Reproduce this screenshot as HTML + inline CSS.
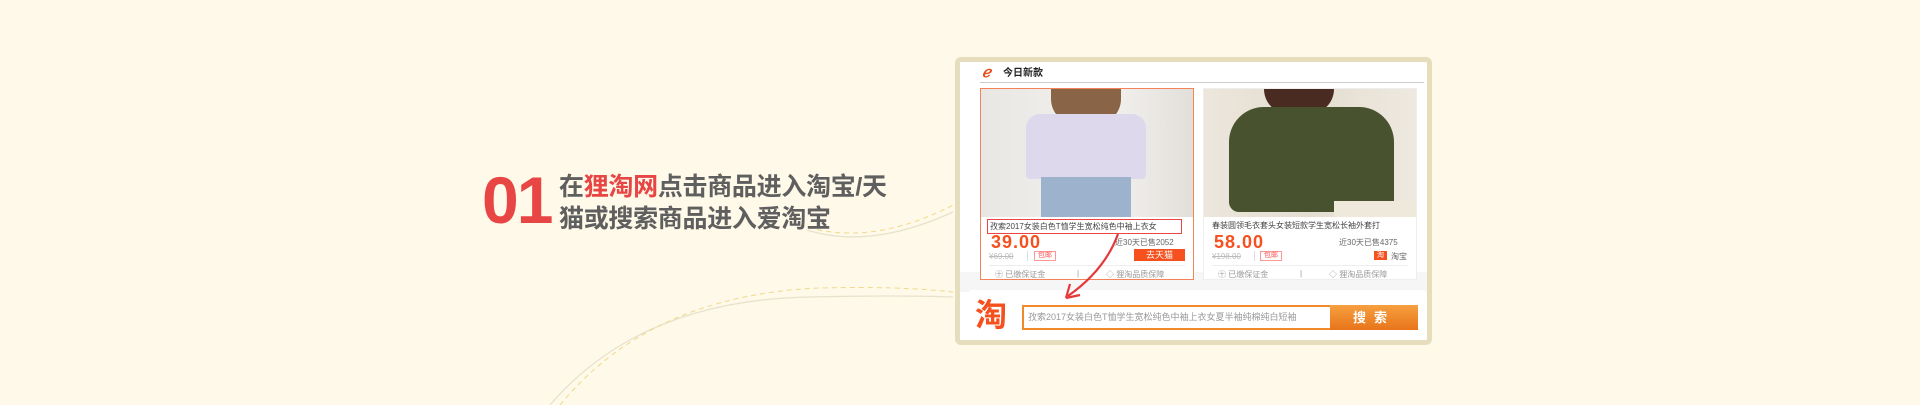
<!DOCTYPE html>
<html><head><meta charset="utf-8"><style>
*{margin:0;padding:0;box-sizing:border-box}
body{width:1920px;height:405px;background:#fef9e8;position:relative;overflow:hidden;font-family:"Liberation Sans","Noto Sans CJK SC",sans-serif}
.abs{position:absolute}
.num{left:482px;top:166px;font-size:66px;font-weight:bold;color:#e84545;letter-spacing:-2px;line-height:68px}
.t{left:559px;font-size:25px;font-weight:bold;color:#5f5f5f;line-height:30px;letter-spacing:-0.3px;white-space:nowrap}
.panel{left:955px;top:57px;width:477px;height:288px;border:5px solid #e6ddbd;border-radius:6px;background:#fff}
.card{top:26px;width:214px;height:192px;background:#fff;z-index:2}
.s{font-size:8px;color:#666;white-space:nowrap}
</style></head><body>
<svg class="abs" style="left:0;top:0" width="1920" height="405">
<path d="M807 230 Q870 250 953 212" fill="none" stroke="#e8e2cc" stroke-width="1.3"/>
<path d="M800 225 Q870 248 953 205" fill="none" stroke="#f0d98c" stroke-width="1" stroke-dasharray="5 4"/>
<path d="M550 405 Q640 300 810 297 Q900 295 953 297" fill="none" stroke="#e8e2cc" stroke-width="1.3"/>
<path d="M560 405 Q650 295 820 288 Q900 286 953 292" fill="none" stroke="#f0d98c" stroke-width="1" stroke-dasharray="5 4"/>
</svg>
<div class="abs num">01</div>
<div class="abs t" style="top:172px">在<span style="color:#e84545">狸淘网</span>点击商品进入淘宝/天</div>
<div class="abs t" style="top:204px">猫或搜索商品进入爱淘宝</div>

<div class="abs panel">
  <div class="abs" style="left:22px;top:5px;width:16px;height:12px;color:#e8501e;font-size:15px;font-weight:bold;font-style:italic;line-height:12px">ℯ</div>
  <div class="abs" style="left:43px;top:5px;font-size:10px;font-weight:bold;color:#222;line-height:14px">今日新款</div>
  <div class="abs" style="left:20px;top:20px;width:444px;height:1px;background:#ccc"></div>

  <div class="abs" style="left:0;top:210px;width:467px;height:20px;background:#f6f6f6"></div>

  <div class="abs card" style="left:20px;border:1px solid #f4835a">
    <div class="abs" style="left:0;top:0;width:212px;height:128px;background:linear-gradient(90deg,#e9e7e4,#f3f1ee 60%,#e2dfdb);overflow:hidden">
      <div class="abs" style="left:70px;top:-5px;width:70px;height:40px;background:#8a6446;border-radius:0 0 25px 25px"></div>
      <div class="abs" style="left:45px;top:25px;width:120px;height:65px;background:#ddd8ec;border-radius:14px 14px 4px 4px"></div>
      <div class="abs" style="left:60px;top:88px;width:90px;height:40px;background:#9db3cd"></div>
    </div>
    <div class="abs" style="left:6px;top:130px;width:195px;height:15px;border:1px solid #e44;font-size:8px;color:#444;line-height:13px;padding-left:2px;white-space:nowrap;overflow:hidden">孜索2017女装白色T恤学生宽松纯色中袖上衣女</div>
    <div class="abs" style="left:10px;top:143px;font-size:18px;font-weight:bold;color:#f5501e;letter-spacing:1px">39.00</div>
    <div class="abs s" style="left:134px;top:148px">近30天已售2052</div>
    <div class="abs s" style="left:8px;top:163px;color:#bbb;text-decoration:line-through">¥69.00</div>
    <div class="abs" style="left:46px;top:162px;width:1px;height:10px;background:#ddd"></div>
    <div class="abs" style="left:53px;top:162px;width:22px;height:10px;border:1px solid #f99;font-size:7px;color:#f55;line-height:8px;text-align:center">包邮</div>
    <div class="abs" style="left:153px;top:160px;width:51px;height:12px;background:#f5501e;color:#fff;font-size:9px;line-height:12px;text-align:center">去天猫</div>
    <div class="abs" style="left:8px;top:176px;width:196px;height:1px;background:#eee"></div>
    <div class="abs s" style="left:14px;top:180px;color:#999">㊉ 已缴保证金</div>
    <div class="abs s" style="left:96px;top:180px;color:#999">|</div>
    <div class="abs s" style="left:125px;top:180px;color:#999">◇ 狸淘品质保障</div>
  </div>

  <div class="abs card" style="left:243px;border:1px solid #eee">
    <div class="abs" style="left:0;top:0;width:212px;height:128px;background:linear-gradient(90deg,#ece6dc,#e4ddd0 50%,#eee9e0);overflow:hidden">
      <div class="abs" style="left:60px;top:-5px;width:70px;height:30px;background:#4a2b22;border-radius:0 0 25px 25px"></div>
      <div class="abs" style="left:25px;top:18px;width:165px;height:105px;background:#48522e;border-radius:35px 35px 10px 10px"></div>
      <div class="abs" style="left:130px;top:112px;width:82px;height:16px;background:#efe9dc"></div>
    </div>
    <div class="abs" style="left:8px;top:131px;font-size:8px;color:#444;white-space:nowrap">春装圆领毛衣套头女装短款学生宽松长袖外套打</div>
    <div class="abs" style="left:10px;top:143px;font-size:18px;font-weight:bold;color:#f5501e;letter-spacing:1px">58.00</div>
    <div class="abs s" style="left:135px;top:148px">近30天已售4375</div>
    <div class="abs s" style="left:8px;top:163px;color:#bbb;text-decoration:line-through">¥198.00</div>
    <div class="abs" style="left:50px;top:162px;width:1px;height:10px;background:#ddd"></div>
    <div class="abs" style="left:56px;top:162px;width:22px;height:10px;border:1px solid #f99;font-size:7px;color:#f55;line-height:8px;text-align:center">包邮</div>
    <div class="abs" style="left:170px;top:162px;width:13px;height:9px;background:#f5501e;color:#fff;font-size:7px;line-height:9px;text-align:center">淘</div>
    <div class="abs s" style="left:187px;top:162px">淘宝</div>
    <div class="abs" style="left:8px;top:176px;width:196px;height:1px;background:#eee"></div>
    <div class="abs s" style="left:14px;top:180px;color:#999">㊉ 已缴保证金</div>
    <div class="abs s" style="left:96px;top:180px;color:#999">|</div>
    <div class="abs s" style="left:125px;top:180px;color:#999">◇ 狸淘品质保障</div>
  </div>

  <div class="abs" style="left:10px;top:228px;width:455px;height:46px;background:#fff">
    <div class="abs" style="left:5px;top:9px;font-size:32px;font-weight:bold;color:#f5501e;line-height:32px">淘</div>
    <div class="abs" style="left:52px;top:15px;width:396px;height:25px;border:2px solid #f08a2a;background:#fff">
      <div class="abs" style="left:4px;top:3px;font-size:9px;color:#999;white-space:nowrap;line-height:15px">孜索2017女装白色T恤学生宽松纯色中袖上衣女夏半袖纯棉纯白短袖</div>
      <div class="abs" style="left:306px;top:-2px;width:88px;height:25px;background:linear-gradient(#f6a040,#e8741a);color:#fff;font-size:13px;font-weight:bold;text-align:center;line-height:25px;letter-spacing:8px">搜索</div>
    </div>
  </div>
</div>
<svg class="abs" style="left:1060px;top:230px;z-index:5" width="70" height="70">
<path d="M58 4 Q45 40 8 66" fill="none" stroke="#e63838" stroke-width="2.2"/>
<path d="M6 68 L10 54 M6 68 L20 65" fill="none" stroke="#e63838" stroke-width="2.2"/>
</svg>
</body></html>
